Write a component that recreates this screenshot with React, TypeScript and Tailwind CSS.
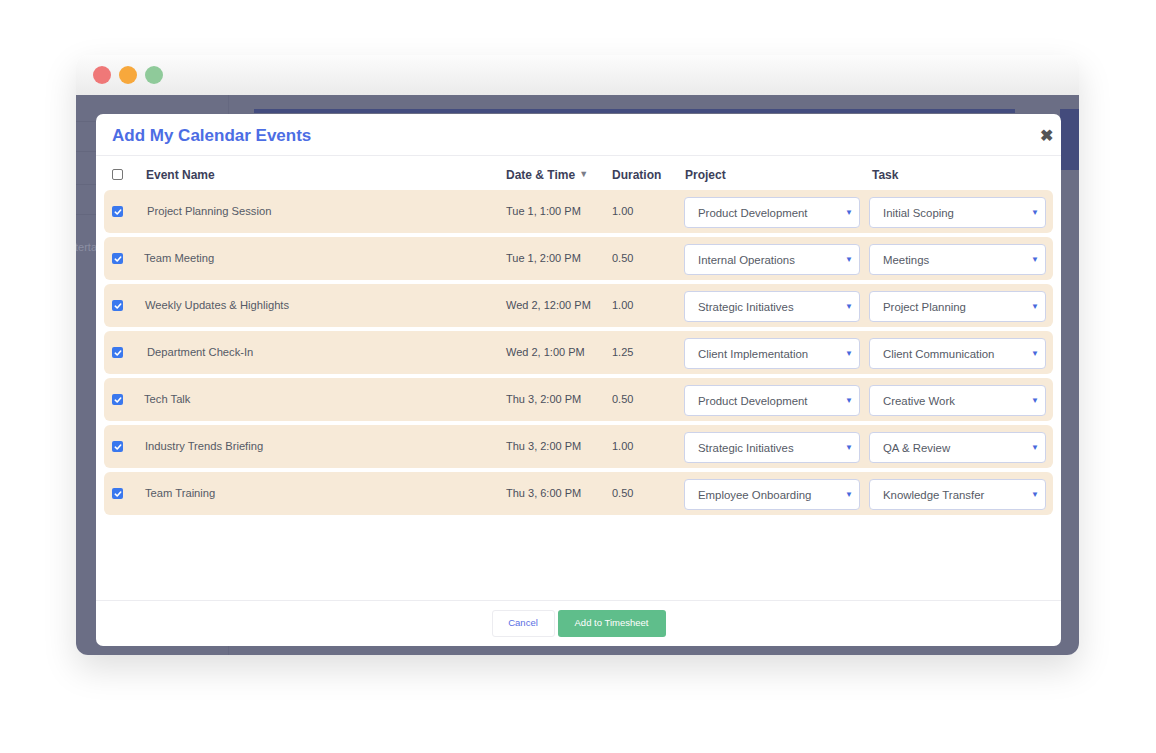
import React from "react";

type Row = {
  name: string;
  date: string;
  duration: string;
  project: string;
  task: string;
  nudge: string;
};

const rows: Row[] = [
  { name: "Project Planning Session", date: "Tue 1, 1:00 PM", duration: "1.00", project: "Product Development", task: "Initial Scoping", nudge: "pl-[3px]" },
  { name: "Team Meeting", date: "Tue 1, 2:00 PM", duration: "0.50", project: "Internal Operations", task: "Meetings", nudge: "pl-0" },
  { name: "Weekly Updates & Highlights", date: "Wed 2, 12:00 PM", duration: "1.00", project: "Strategic Initiatives", task: "Project Planning", nudge: "pl-[1px]" },
  { name: "Department Check-In", date: "Wed 2, 1:00 PM", duration: "1.25", project: "Client Implementation", task: "Client Communication", nudge: "pl-[3px]" },
  { name: "Tech Talk", date: "Thu 3, 2:00 PM", duration: "0.50", project: "Product Development", task: "Creative Work", nudge: "pl-0" },
  { name: "Industry Trends Briefing", date: "Thu 3, 2:00 PM", duration: "1.00", project: "Strategic Initiatives", task: "QA & Review", nudge: "pl-[1px]" },
  { name: "Team Training", date: "Thu 3, 6:00 PM", duration: "0.50", project: "Employee Onboarding", task: "Knowledge Transfer", nudge: "pl-[1px]" },
];

const Check = ({ on }: { on: boolean }) =>
  on ? (
    <span className="flex h-[11px] w-[11px] items-center justify-center rounded-[2px] bg-[#3a78ee]">
      <svg width="8" height="8" viewBox="0 0 8 8" fill="none">
        <path d="M1.3 4.2 3.2 6 6.7 2" stroke="white" strokeWidth="1.6" strokeLinecap="round" strokeLinejoin="round" />
      </svg>
    </span>
  ) : (
    <span className="block h-[11px] w-[11px] rounded-[2px] border border-[#767676] bg-white" />
  );

const Select = ({ value, width }: { value: string; width: string }) => (
  <div className={`${width} flex h-[31px] items-center justify-between rounded-[4px] border border-[#cdd3ea] bg-white pl-[13px] pr-[6px]`}>
    <span className="pt-[2px] text-[11.4px] text-[#555a66]">{value}</span>
    <span className="text-[8px] text-[#4868dc]">▼</span>
  </div>
);

export default function App() {
  return (
    <div className="min-h-[753px] w-full bg-white font-['Liberation_Sans',Arial,sans-serif]">
      <div className="pl-[76px] pt-[55px]">
        <div className="flex h-[600px] w-[1003px] flex-col overflow-hidden rounded-[12px] shadow-[0_14px_34px_rgba(0,0,0,0.13)]">
          {/* title bar */}
          <div className="flex h-[40px] shrink-0 items-center gap-[8px] bg-gradient-to-b from-[#fcfcfc] to-[#ebebeb] pl-[17px]">
            <span className="h-[18px] w-[18px] rounded-full bg-[#ef7878]" />
            <span className="h-[18px] w-[18px] rounded-full bg-[#f7a83c]" />
            <span className="h-[18px] w-[18px] rounded-full bg-[#8fca9a]" />
          </div>

          {/* dimmed app behind the dialog */}
          <div className="relative flex flex-1 bg-[#6b6e85]">
            <div className="flex w-[153px] flex-col border-r border-[#656880]">
              <div className="h-[27px] border-b border-[#64677e]" />
              <div className="h-[30px] border-b border-[#64677e]" />
              <div className="h-[33px] border-b border-[#64677e]" />
              <div className="h-[30px] border-b border-[#64677e]" />
              <div className="pt-[24px] text-[11px] text-[#8c8fa3]">
                <span className="-ml-[1px]">terta</span>
              </div>
            </div>
            <div className="flex flex-1 flex-col pl-[25px] pt-[14px]">
              <div className="flex">
                <div className="h-[4px] flex-1 bg-[#434c7e]" />
                <div className="w-[45px]" />
                <div className="h-[61px] w-[19px] bg-[#434b7c]" />
              </div>
            </div>

            {/* dialog */}
            <div className="absolute bottom-[9px] left-[20px] right-[18px] top-[19px] flex flex-col rounded-[7px] bg-white">
              <div className="flex h-[42px] shrink-0 items-center justify-between border-b border-[#ececf0] pl-[16px] pr-[8px]">
                <h2 className="pt-[2px] text-[17px] font-bold text-[#4c6de4]">Add My Calendar Events</h2>
                <span className="pt-[2px] text-[16px] font-bold leading-none text-[#555]">✖</span>
              </div>

              <div className="flex flex-1 flex-col px-[8px]">
                <div className="flex h-[34px] items-center pt-[3px] text-[12px] font-bold text-[#3c3f5a]">
                  <div className="w-[42px] pl-[8px]">
                    <Check on={false} />
                  </div>
                  <div className="w-[360px]">Event Name</div>
                  <div className="flex w-[106px] items-center gap-[4px]">
                    Date &amp; Time <span className="text-[9px] text-[#7a7d88]">▼</span>
                  </div>
                  <div className="w-[73px]">Duration</div>
                  <div className="w-[187px]">Project</div>
                  <div>Task</div>
                </div>

                <div className="flex flex-col gap-[4px]">
                  {rows.map((r) => (
                    <div key={r.name} className="flex h-[43px] items-center rounded-[6px] bg-[#f7ead8]">
                      <div className="w-[40px] pl-[8px]">
                        <Check on />
                      </div>
                      <div className={`w-[362px] text-[11.2px] text-[#555a66] ${r.nudge}`}>{r.name}</div>
                      <div className="w-[106px] text-[11px] text-[#4b4f5c]">{r.date}</div>
                      <div className="w-[72px] text-[11px] text-[#4b4f5c]">{r.duration}</div>
                      <div className="flex gap-[9px] pt-[2px]">
                        <Select value={r.project} width="w-[176px]" />
                        <Select value={r.task} width="w-[177px]" />
                      </div>
                    </div>
                  ))}
                </div>
              </div>

              <div className="flex h-[46px] shrink-0 items-center justify-center gap-[3px] border-t border-[#ececf0]">
                <button className="h-[27px] w-[63px] rounded-[3px] border border-[#ececf0] bg-white text-[9.5px] text-[#5a6fe3]">
                  Cancel
                </button>
                <button className="h-[27px] w-[108px] rounded-[3px] bg-[#5fbe8b] text-[9.5px] text-white">
                  Add to Timesheet
                </button>
              </div>
            </div>
          </div>
        </div>
      </div>
    </div>
  );
}
